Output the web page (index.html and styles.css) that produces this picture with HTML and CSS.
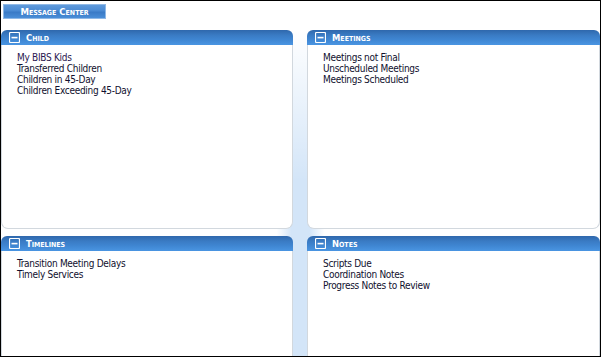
FILE: index.html
```html
<!DOCTYPE html>
<html>
<head>
<meta charset="utf-8">
<link rel="stylesheet" href="styles.css">
</head>
<body>
<div class="frame">
  <div class="topbar">
    <div class="mc-btn">Message Center</div>
  </div>
  <div class="grid">
    <section class="panel">
      <div class="panel-head">
        <svg class="toggle" width="11" height="11" viewBox="0 0 11 11"><rect x="0.5" y="0.5" width="10" height="10" rx="1" fill="none" stroke="#fff" stroke-width="1.2"/><rect x="2.5" y="4.8" width="6" height="1.6" fill="#fff"/></svg>
        <span class="title">Child</span>
      </div>
      <div class="panel-body">
        <a class="item visited">My BIBS Kids</a>
        <a class="item">Transferred Children</a>
        <a class="item">Children in 45-Day</a>
        <a class="item">Children Exceeding 45-Day</a>
      </div>
    </section>
    <section class="panel">
      <div class="panel-head">
        <svg class="toggle" width="11" height="11" viewBox="0 0 11 11"><rect x="0.5" y="0.5" width="10" height="10" rx="1" fill="none" stroke="#fff" stroke-width="1.2"/><rect x="2.5" y="4.8" width="6" height="1.6" fill="#fff"/></svg>
        <span class="title">Meetings</span>
      </div>
      <div class="panel-body">
        <a class="item">Meetings not Final</a>
        <a class="item">Unscheduled Meetings</a>
        <a class="item">Meetings Scheduled</a>
      </div>
    </section>
    <section class="panel">
      <div class="panel-head">
        <svg class="toggle" width="11" height="11" viewBox="0 0 11 11"><rect x="0.5" y="0.5" width="10" height="10" rx="1" fill="none" stroke="#fff" stroke-width="1.2"/><rect x="2.5" y="4.8" width="6" height="1.6" fill="#fff"/></svg>
        <span class="title">Timelines</span>
      </div>
      <div class="panel-body">
        <a class="item">Transition Meeting Delays</a>
        <a class="item">Timely Services</a>
      </div>
    </section>
    <section class="panel">
      <div class="panel-head">
        <svg class="toggle" width="11" height="11" viewBox="0 0 11 11"><rect x="0.5" y="0.5" width="10" height="10" rx="1" fill="none" stroke="#fff" stroke-width="1.2"/><rect x="2.5" y="4.8" width="6" height="1.6" fill="#fff"/></svg>
        <span class="title">Notes</span>
      </div>
      <div class="panel-body">
        <a class="item">Scripts Due</a>
        <a class="item">Coordination Notes</a>
        <a class="item">Progress Notes to Review</a>
      </div>
    </section>
  </div>
</div>
</body>
</html>
```
FILE: styles.css
```css
html, body {
  margin: 0;
  padding: 0;
  background: #fff;
}
.frame {
  width: 601px;
  height: 357px;
  box-sizing: border-box;
  border: 1px solid #000;
  overflow: hidden;
  background: #fff;
  font-family: "DejaVu Sans Condensed", "DejaVu Sans", sans-serif;
}
.topbar {
  height: 29px;
  padding: 3px 0 0 2px;
  box-sizing: border-box;
}
.mc-btn {
  width: 103px;
  height: 15px;
  box-sizing: border-box;
  background: linear-gradient(to bottom, #5f9adb 0%, #4a8ad3 45%, #3a7ac6 55%, #4a8ed8 100%);
  border: 1px solid #8fb8e6;
  color: #fff;
  font-weight: bold;
  font-variant: small-caps;
  font-size: 9.5px;
  line-height: 13px;
  text-align: center;
}
.grid {
  display: grid;
  grid-template-columns: 292px 293px;
  grid-template-rows: 199px 130px;
  column-gap: 14px;
  row-gap: 7px;
  background:
    linear-gradient(to bottom, #fff 0%, rgba(255,255,255,0) 45%),
    linear-gradient(to right, #fff 46%, #d3e5f8 48.5%, #d3e5f8 51.5%, #fff 54%);
}
.panel {
  display: flex;
  flex-direction: column;
  min-height: 0;
}
.panel-head {
  height: 15px;
  flex: none;
  display: flex;
  align-items: center;
  gap: 6px;
  padding-left: 8px;
  border-radius: 6px 6px 0 0;
  background: linear-gradient(to bottom, #2f68ac 0%, #3a7bc4 35%, #3f86d2 65%, #4a95e2 100%);
}
.toggle {
  display: block;
  flex: none;
}
.title {
  color: #fff;
  font-weight: bold;
  font-variant: small-caps;
  font-size: 9.3px;
  line-height: 13px;
}
.panel-body {
  flex: 1;
  background: #fff;
  border: 1px solid #d2d8de;
  border-top: none;
  border-radius: 0 0 7px 7px;
  padding: 7px 0 0 15px;
  display: flex;
  flex-direction: column;
}
.item {
  color: #10102e;
  font-size: 10px;
  line-height: 11px;
  letter-spacing: -0.3px;
}
.item.visited {
  color: #2a1850;
}
```
